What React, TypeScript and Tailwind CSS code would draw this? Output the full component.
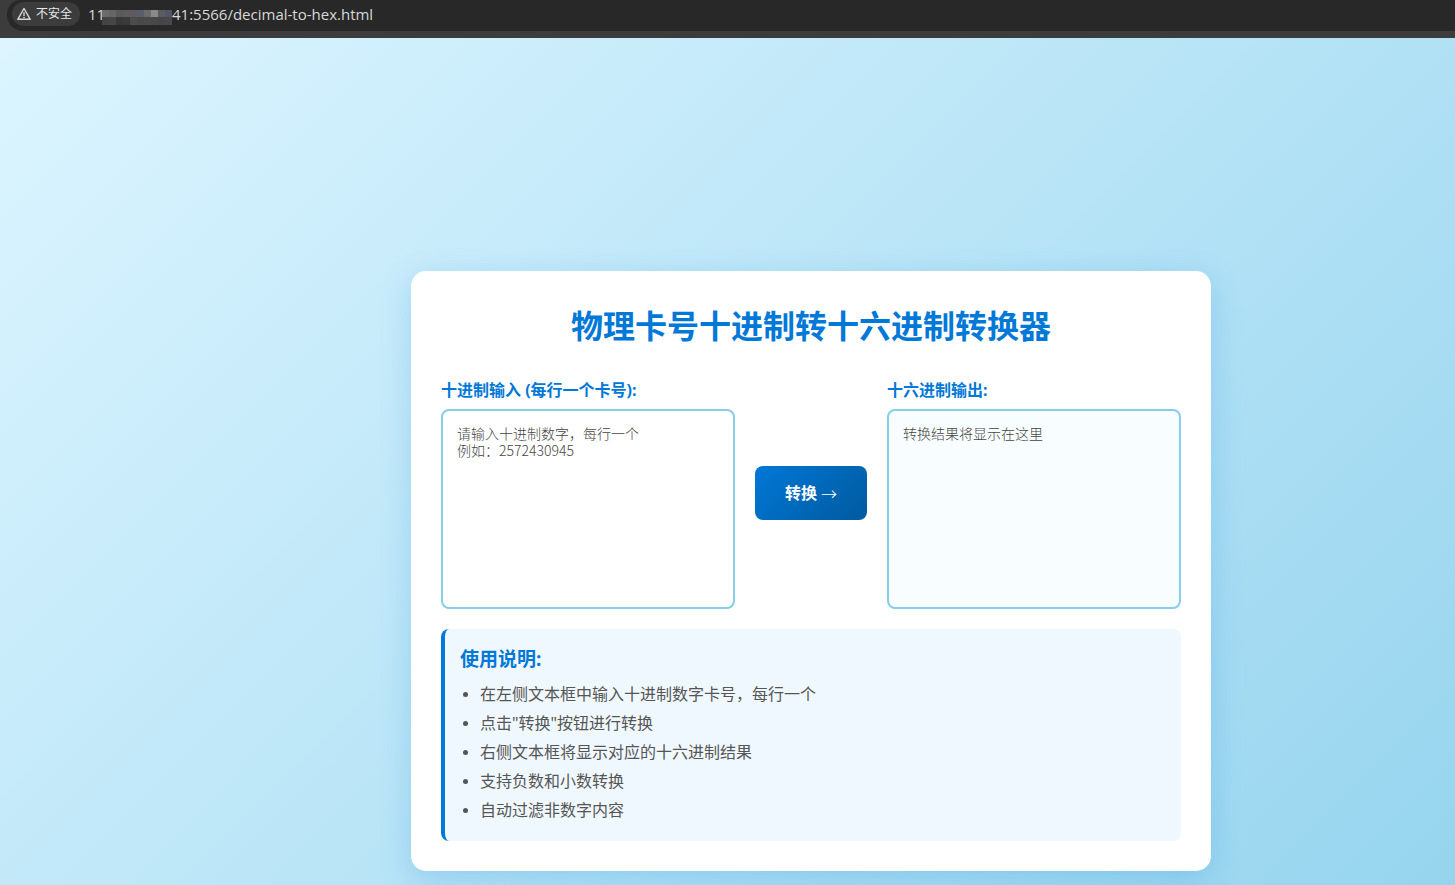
import React, { useState } from 'react';

const tips: string[] = [
  '在左侧文本框中输入十进制数字卡号，每行一个',
  '点击"转换"按钮进行转换',
  '右侧文本框将显示对应的十六进制结果',
  '支持负数和小数转换',
  '自动过滤非数字内容',
];

// colours of the blurred out part of the address
const mosaic: string[] = [
  '#6c6c6c', '#666666', '#5a5a5a', '#5c5c5c', '#5e5a60', '#5a5e6c', '#6e6a68', '#8a8a8c', '#5c5c60', '#525664',
  '#444444', '#464646', '#383838', '#3a3a3a', '#4c4c4c', '#484848', '#4a4a4a', '#484848', '#464646', '#484848',
];

const toHex = (line: string): string => {
  const value = Number(line.replace(/[^0-9.-]/g, ''));
  return Number.isNaN(value) ? '' : value.toString(16).toUpperCase();
};

const AddressBar: React.FC = () => {
  return (
    <header className="h-[38px] bg-[#3c3c3c] pb-[7px] pl-[7px]">
      <div className="flex h-full items-center rounded-bl-[16px] rounded-tl-[14px] bg-[#282828] pb-[3px] pl-[5px]">
        <button type="button" className="flex h-6 items-center gap-1 rounded-full bg-[#3c3c3c] pl-1 pr-2 text-xs text-[#e8e8e8]">
          <svg width="16" height="16" viewBox="0 0 16 16" fill="none" stroke="#d8d8d8" strokeWidth="1.4" strokeLinejoin="round">
            <path d="M8 2.5 14.2 13.3H1.8Z" />
            <path d="M8 6.3v3.6M8 10.7v1.3" />
          </svg>
          不安全
        </button>
        <div className="ml-2 flex font-['Open_Sans',sans-serif] text-[15px] leading-5 text-[#d8d8d8]">
          <span className="w-[14px]">11</span>
          <span className="mt-[6px] grid h-[15px] w-[70px] grid-cols-10" aria-hidden="true">
            {mosaic.map((color, i) => (
              <span key={i} style={{ backgroundColor: color }} />
            ))}
          </span>
          <span>41:5566/decimal-to-hex.html</span>
        </div>
      </div>
    </header>
  );
};

export default function App() {
  const [input, setInput] = useState('');
  const [output, setOutput] = useState('');

  const convert = () => {
    setOutput(input.split('\n').filter((line) => line.trim()).map(toHex).join('\n'));
  };

  return (
    <div className="flex min-h-screen flex-col font-['Noto_Sans','Noto_Sans_CJK_SC',sans-serif]">
      <AddressBar />
      <main className="flex flex-1 items-start justify-center bg-linear-135 from-[#dcf5ff] to-[#87ceeb] to-120% pb-[14px] pl-[167px] pt-[233px]">
        <div className="w-full max-w-[800px] rounded-[15px] bg-white p-[30px] shadow-[0_8px_32px_rgba(0,120,215,0.2)]">
          <h1 className="mb-[26px] text-center text-[32px] font-bold leading-[50px] text-[#0078d7]">
            物理卡号十进制转十六进制转换器
          </h1>
          <div className="flex items-center gap-5">
            <div className="min-w-0 flex-1">
              <label htmlFor="decimal" className="mb-[6px] block font-bold leading-[26px] text-[#0078d7]">
                十进制输入 (每行一个卡号):
              </label>
              <textarea
                id="decimal"
                value={input}
                onChange={(e) => setInput(e.target.value)}
                placeholder={'请输入十进制数字，每行一个\n例如：2572430945'}
                className="block h-[200px] w-full resize-none rounded-lg border-2 border-[#87ceeb] bg-white p-[14px] font-['Noto_Sans_CJK_SC',monospace] text-sm font-light leading-[17px] text-[#333] placeholder:text-[#444]"
              />
            </div>
            <button
              type="button"
              onClick={convert}
              className="flex items-center gap-1 rounded-lg bg-linear-135 from-[#0078d7] to-[#005a9e] px-[30px] py-[15px] font-bold leading-6 text-white"
            >
              转换
              <span className="font-['Noto_Sans_CJK_SC',sans-serif] font-light">→</span>
            </button>
            <div className="min-w-0 flex-1">
              <label htmlFor="hex" className="mb-[6px] block font-bold leading-[26px] text-[#0078d7]">
                十六进制输出:
              </label>
              <textarea
                id="hex"
                readOnly
                value={output}
                placeholder="转换结果将显示在这里"
                className="block h-[200px] w-full resize-none rounded-lg border-2 border-[#87ceeb] bg-[#f8fdff] p-[14px] font-['Noto_Sans_CJK_SC',monospace] text-sm font-light leading-[17px] text-[#333] placeholder:text-[#444]"
              />
            </div>
          </div>
          <div className="mt-5 rounded-lg border-l-4 border-[#0078d7] bg-[#f0f8ff] p-[15px]">
            <h3 className="mb-[6px] text-[19px] font-bold leading-[31px] text-[#0078d7]">使用说明:</h3>
            <ul className="list-disc pl-5 text-[#555]">
              {tips.map((tip) => (
                <li key={tip} className="mb-[2px] leading-[27px] marker:text-sm">{tip}</li>
              ))}
            </ul>
          </div>
        </div>
      </main>
    </div>
  );
}
